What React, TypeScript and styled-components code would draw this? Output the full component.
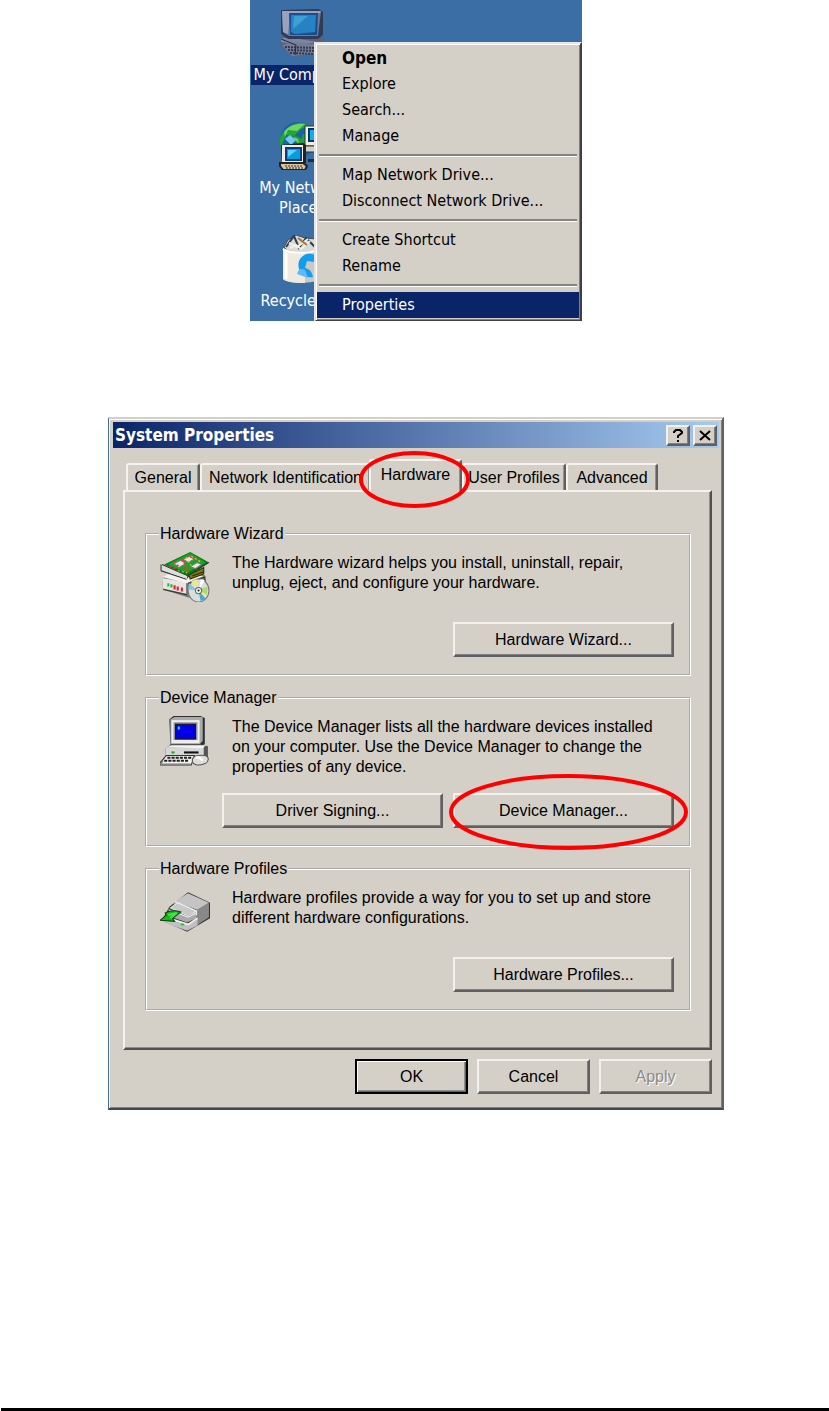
import React from 'react';
import styled, { createGlobalStyle, css } from 'styled-components';

const face = '#d4d0c8';
const navy = '#0a246a';

const Global = createGlobalStyle`
  * { box-sizing: border-box; }
  body { margin: 0; background: #fff; color: #000; }
  button { font: inherit; color: inherit; margin: 0; padding: 0; border: 0; border-radius: 0; }
`;

const Page = styled.main`
  display: flex;
  flex-direction: column;
  align-items: center;
  min-height: 100vh;
  padding-left: 3px;
`;

/* ---------- desktop and context menu ---------- */

const Desktop = styled.section`
  position: relative;
  width: 100%;
  max-width: 332px;
  height: 321px;
  overflow: hidden;
  background: #3a6ea5;
  font: 16px/20px 'DejaVu Sans Condensed', 'Noto Sans', sans-serif;
`;

const Shortcuts = styled.ul`
  display: flex;
  flex-direction: column;
  gap: 37px;
  width: 102px;
  margin: 0;
  padding: 9px 0 0 2px;
  list-style: none;
`;

const Shortcut = styled.li`
  display: flex;
  flex-direction: column;
  align-items: center;
  gap: 8px;
  color: #fff;
  text-align: center;
  & + & + & { margin-top: -20px; }
  svg { display: block; width: 48px; height: 48px; }
`;

const ShortcutName = styled.span<{ $selected?: boolean }>`
  padding: 0 2px;
  white-space: nowrap;
  background: ${p => (p.$selected ? navy : 'transparent')};
`;

const Menu = styled.div`
  position: absolute;
  top: 42px;
  right: 0;
  display: flex;
  flex-direction: column;
  width: 268px;
  padding: 1px 1px 2px;
  background: ${face};
  border: 2px solid;
  border-color: #e8e6e0 #404040 #404040 #e8e6e0;
  box-shadow: inset 1px 1px #fff, inset -1px -1px #808080;
`;

const MenuItem = styled.button<{ $strong?: boolean; $active?: boolean }>`
  height: 26px;
  padding: 0 25px;
  text-align: left;
  white-space: nowrap;
  font-size: ${p => (p.$strong ? 17 : 16)}px;
  font-weight: ${p => (p.$strong ? 700 : 400)};
  color: ${p => (p.$active ? '#fff' : '#000')};
  background: ${p => (p.$active ? navy : 'transparent')};
`;

const MenuRule = styled.hr`
  width: calc(100% - 4px);
  height: 3px;
  margin: 5px 2px;
  border: 0;
  border-top: 2px solid #868480;
  border-bottom: 1px solid #fff;
`;

/* ---------- dialog ---------- */

const Dialog = styled.section`
  display: flex;
  flex-direction: column;
  width: 100%;
  max-width: 616px;
  margin-top: 96px;
  padding: 3px 3px 14px;
  background: ${face};
  border: 2px solid;
  border-color: ${face} #606060 #404848 #3a6ea5;
  border-left-width: 1px;
  box-shadow: inset 1px 1px #fff, inset -1px -1px #808080;
  font: 16px/20px 'Liberation Sans', Arial, sans-serif;
`;

const TitleBar = styled.header`
  display: flex;
  align-items: center;
  gap: 3px;
  height: 26px;
  margin-left: 1px;
  padding: 0 2px;
  background: linear-gradient(90deg, ${navy}, #a6caf0);
`;

const Title = styled.h1`
  flex: 1;
  margin: 0;
  color: #fff;
  font: bold 17px/20px 'DejaVu Sans Condensed', 'Noto Sans', sans-serif;
`;

const bevel = css`
  background: ${face};
  border: 2px solid;
  border-color: #f2f1ee #606060 #606060 #f2f1ee;
  box-shadow: inset -1px -1px #808080;
`;

const CaptionButton = styled.button`
  ${bevel}
  display: grid;
  place-items: center;
  width: 24px;
  height: 21px;
  svg { display: block; }
`;

const Body = styled.div`
  padding: 11px 7px 0 11px;
`;

const Tabs = styled.div`
  display: flex;
  align-items: flex-end;
  height: 31px;
  padding-left: 3px;
`;

const Tab = styled.button<{ $width: number; $selected?: boolean }>`
  position: relative;
  flex: 0 1 ${p => p.$width}px;
  height: 27px;
  white-space: nowrap;
  background: ${face};
  border: 2px solid;
  border-color: #f4f3f0 #606060 transparent #f4f3f0;
  border-bottom: 0;
  border-radius: 3px 3px 0 0;
  box-shadow: inset -1px 0 #909090;
  ${p => p.$selected && css`
    z-index: 1;
    height: 33px;
    margin: 0 0 -2px -2px;
    padding-bottom: 4px;
  `}
`;

const Pane = styled.div`
  display: flex;
  flex-direction: column;
  gap: 12px;
  min-height: 560px;
  padding: 32px 19px 36px 20px;
  border: 2px solid;
  border-color: #f4f3f0 #505050 #505050 #f4f3f0;
  box-shadow: inset -1px -1px #909090;
`;

const Group = styled.fieldset`
  min-width: 0;
  margin: 0;
  padding: 8px 15px 17px 13px;
  border: 2px groove #fff;
`;

const Legend = styled.legend`
  margin-left: -1px;
  padding: 0 1px;
`;

const Info = styled.div<{ $lines: number }>`
  display: flex;
  gap: 22px;
  min-height: ${p => p.$lines * 20}px;
  svg { flex: none; width: 50px; height: 50px; }
  p { margin: 1px 0 0; }
`;

const Actions = styled.div<{ $gap: number }>`
  display: flex;
  justify-content: flex-end;
  gap: 10px;
  margin-top: ${p => p.$gap}px;
`;

const PushButton = styled.button`
  ${bevel}
  flex: 0 1 221px;
  height: 35px;
  &:disabled { color: #8c8a86; text-shadow: 1px 1px #fff; }
`;

const Footer = styled.footer`
  display: flex;
  justify-content: flex-end;
  gap: 9px;
  margin-top: 9px;
  ${PushButton} { flex-basis: 113px; }
`;

const DefaultButton = styled(PushButton)`
  border-color: #000;
  box-shadow: inset 1px 1px #fff, inset -1px -1px #606060, inset -2px -2px #909090;
`;

const Anchor = styled.span`
  position: relative;
  display: flex;
  flex: 0 1 221px;
`;

const Mark = styled.svg<{ $w: number; $h: number; $top: number; $left: number }>`
  position: absolute;
  z-index: 2;
  top: ${p => p.$top}px;
  left: ${p => p.$left}px;
  width: ${p => p.$w}px;
  height: ${p => p.$h}px;
  overflow: visible;
  pointer-events: none;
`;

const PageRule = styled.hr`
  align-self: stretch;
  height: 3px;
  margin: auto 0 0 -2px;
  border: 0;
  background: #000;
`;

function Ring(p: { w: number; h: number; top: number; left: number }) {
  return (
    <Mark $w={p.w} $h={p.h} $top={p.top} $left={p.left} aria-hidden="true">
      <ellipse cx={p.w / 2} cy={p.h / 2} rx={p.w / 2 - 2} ry={p.h / 2 - 2} fill="none" stroke="#f00" strokeWidth="4" />
    </Mark>
  );
}

/* ---------- drawings ---------- */

const ComputerIcon = () => (
  <svg viewBox="0 0 48 48" aria-hidden="true">
    <path d="M4 27 8 24h29l8 5v5L17 48 2 37z" fill="#59627b" />
    <path d="M3 29h12l25 4-22 3L3 33z" fill="#7787a5" />
    <path d="M4 36 18 33l27 3-4 8-27 3z" fill="#777c93" />
    <path d="M7 38l31 1M10 41l28 1M12 44l24 1" stroke="#303851" strokeWidth="2" strokeDasharray="2 1" />
    <path d="M3 1 41 0l4 3v23l-5 4H10l-7-5z" fill="#323b56" />
    <path d="M4 2h39l-3 25H11l-6-4z" fill="#6f7899" />
    <path d="M4 2h39l-1 2H12l-2 21-5-2z" fill="#99a2bd" />
    <path d="M11 4h29l-1 22H12z" fill="#184e91" />
    <path d="M13 6h25l-1 17-20 2-4-2z" fill="#2782c3" />
    <path d="M16 7h14L15 20z" fill="#3d9fd4" />
    <path d="M3 30l15 6-1 10" fill="none" stroke="#20283e" strokeWidth="1" />
  </svg>
);

const NetworkIcon = () => (
  <svg viewBox="0 0 48 48" aria-hidden="true">
    <circle cx="20" cy="18" r="18" fill="#1864a9" />
    <path d="M5 11C14 0 25-1 31 4l-8 3-7 7-8-1-5 12c-3-6 0-12 2-14M16 13l6 3 5 11-5-2-5-6zM26 11l9 5-5 7-8-4z" fill="#24a52d" />
    <path d="M6 10c6-8 15-9 21-8l-8 7-9-1-3 7zM15 15l5 2 1 5z" fill="#70d663" />
    <path d="M7 17l5-4 6 5-5 5z" fill="#75c9ed" />
    <path d="M27 4h20v20H27z" fill="#f4eedc" stroke="#333" />
    <path d="M31 7h13v12H31z" fill="#10aeea" stroke="#036" strokeWidth="2" />
    <path d="M27 24h21v6H27z" fill="#d4d0c8" stroke="#333" />
    <path d="M30 37h13v3H30z" fill="#202e32" />
    <path d="M3 23 25 21l3 2v18L25 43H4z" fill="#222" />
    <path d="M4 23h21v18H4z" fill="#f5eedc" />
    <path d="M8 26h15v12H8z" fill="#079cdc" stroke="#083a8d" strokeWidth="2" />
    <path d="M10 28h9l-9 7z" fill="#5bd7ff" />
    <path d="M2 41h23l4 3-2 4H5l-3-4z" fill="#d8c59c" stroke="#222" strokeWidth="2" />
    <path d="M7 44h18M8 46h17" stroke="#343434" strokeDasharray="2 1" />
  </svg>
);

const RecycleIcon = () => (
  <svg viewBox="0 0 48 48" aria-hidden="true">
    <path d="m6 12 4-7 8-5 9 3 11 1 4 9-4 5H11z" fill="#d9d9d8" stroke="#4a4b53" />
    <path d="m8 12 8-11 5 12 7-10 9 9" fill="none" stroke="#293e50" strokeWidth="2" />
    <path d="m11 8 8 4 11-8m-18 9 6-3 5 4 9-8" fill="none" stroke="#f7eedc" strokeWidth="2" />
    <path d="m20 3 9 7" stroke="#9e7845" strokeWidth="2" />
    <path d="M5 13v31c4 5 33 5 37 0V13c-7 5-28 5-37 0z" fill="#c9c9c6" />
    <path d="M5 13v31c4 4 15 4 22 4V17c-8 1-17-1-22-4z" fill="#eeeae0" />
    <path d="M8 17v27" stroke="#fff" strokeWidth="3" />
    <path d="M5 14c6 5 28 5 37 0" fill="none" stroke="#fff" strokeWidth="2" />
    <path d="M21 26c4-9 14-9 19-3l-4 4-7-1-2 7c5 1 7 4 8 9-9 2-17-7-14-16z" fill="#139eed" />
    <path d="M19 39c1-5 4-6 8-4l3 8z" fill="#61baff" />
  </svg>
);

const HardwareIcon = () => (
  <svg viewBox="0 0 48 48" aria-hidden="true">
    <path d="m2 25 8-4 33 1 2 10-17 12L3 36z" fill="#777" />
    <path d="m2 25 23 4v11L3 35z" fill="#e7e5e1" />
    <path d="m2 24 9-4 31 3-16 7z" fill="#f3f2ef" />
    <path d="M3 36l23 5M27 30l16-6v9" fill="none" stroke="#333" />
    <path d="M8 30v3m3-2v3" stroke="#22ba36" strokeWidth="2" />
    <path d="M14 32v4m3-3v4m4-3v4" stroke="#e51c29" strokeWidth="2" />
    <path d="m28 22 14-7v6l-13 5zm3 1 11-4" fill="#807a14" stroke="#292900" />
    <path d="m4 12 25-12 18 10-20 14z" fill="#087b16" />
    <path d="m7 12 22-11 15 9-18 10z" fill="#16a825" />
    <path d="m13 11 7-3 5 3-7 4zm9-4 6-3 5 3-6 3zm7 7 7-4 4 2-6 4z" fill="#e9e7e2" stroke="#777" />
    <path d="m9 14 6 2m-1-7 5 7m2-9 5 7m3-10 8 5m-15 7 7 2" stroke="#ef3540" strokeWidth="2" strokeDasharray="2 2" />
    <path d="m17 18 9 2m-1-15 5 8m0-9 10 6" stroke="#e8d538" strokeWidth="1" strokeDasharray="2 2" />
    <path d="m2 12 24 11 21-13M1 12v6l24 8 3-3" fill="none" stroke="#353535" strokeWidth="1" />
    <path d="m2 13 24 10v3L2 17z" fill="#ddd" />
    <ellipse cx="37" cy="37" rx="10" ry="11" fill="#d9dddd" stroke="#777" strokeWidth="1" />
    <path d="m36 37-6-9 5-2zm1 0 8 2-4 7z" fill="#eee783" />
    <path d="m37 36 9-3-1 8z" fill="#a9db75" />
    <path d="m37 37 7 8-5 2z" fill="#43a8dc" />
    <path d="m36 37-9-1 1-6z" fill="#86c4da" />
    <path d="m38 36 5-9-4-1z" fill="#fff" />
    <ellipse cx="37" cy="37" rx="3" ry="3" fill="#eee" stroke="#666" />
    <circle cx="37" cy="37" r="1" fill="#222" />
  </svg>
);

const DeviceIcon = () => (
  <svg viewBox="0 0 48 48" aria-hidden="true">
    <path d="m9 3 4-3h26l4 2v25l-4 2H10z" fill="#303030" />
    <path d="m10 3 4-2h27v23l-3 3H10z" fill="#aaa" />
    <path d="M11 4h27v22H11z" fill="#eee" />
    <path d="M13 6h23v17H13z" fill="#909090" />
    <path d="M15 8h19v14H15z" fill="#0000e8" stroke="#111" />
    <path d="M17 10h2v3h-2z" fill="#18dfff" />
    <path d="m5 31 6-4h28l7 2v10l-4 3H6z" fill="#555" />
    <path d="M5 30h37v10H6z" fill="#d7d7d7" />
    <path d="m6 30 5-2h33l-3 3z" fill="#f4f4f4" />
    <path d="M23 35h14" stroke="#111" strokeWidth="2" />
    <path d="M11 35h3" stroke="#13ad24" strokeWidth="2" />
    <path d="m0 45 6-7h27l-3 9H0z" fill="#f3f3ef" stroke="#333" />
    <path d="m7 40 23 0m-26 3 24 0" stroke="#202020" strokeWidth="2" strokeDasharray="3 1" />
    <path d="m3 43-2 3h28" fill="none" stroke="#777" />
    <path d="M31 43c0-5 6-6 12-5 5 1 4 7-1 8-5 2-11 1-11-3z" fill="#deddd9" stroke="#555" />
    <path d="M34 40c3-1 5 0 7 3" fill="none" stroke="#fff" strokeWidth="2" />
  </svg>
);

const ProfileIcon = () => (
  <svg viewBox="0 0 48 48" aria-hidden="true">
    <path d="m9 19 18-14 21 10v15L26 43 2 32z" fill="#333" />
    <path d="m14 14 13-8 20 9-11 7z" fill="#c4c4c4" />
    <path d="m35 22 12-7v14l-12 8z" fill="#888" />
    <path d="m14 14 21 9v5l-22-9z" fill="#aaa" />
    <path d="m10 20 7-5 18 8-8 5z" fill="#c8c8c8" stroke="#e4e4e4" />
    <path d="m8 21 18 7 9-4v6l-9 4-17-6z" fill="#aaa" />
    <path d="m4 30 23 7 9-6v6l-10 5L4 34z" fill="#c0c0c0" />
    <path d="m5 29 22 7 9-6" fill="none" stroke="#eee" strokeWidth="2" />
    <path d="m14 14 21 9v4m-26-5 18 7 8-4" fill="none" stroke="#eee" />
    <path d="m0 32 6-5-1-2c5-3 9-3 15-1l-8 6 2 3z" fill="#16b71d" stroke="#103f13" strokeWidth="1" />
    <path d="m8 27 8-2-6 5" fill="none" stroke="#42e643" strokeWidth="2" />
    <path d="M20 35h3v2h-3z" fill="#00e321" />
  </svg>
);

export default function App() {
  return (
    <>
      <Global />
      <Page>
        <Desktop aria-label="Desktop">
          <Shortcuts>
            <Shortcut><ComputerIcon /><ShortcutName $selected>My Computer</ShortcutName></Shortcut>
            <Shortcut><NetworkIcon /><ShortcutName>My Network<br />Places</ShortcutName></Shortcut>
            <Shortcut><RecycleIcon /><ShortcutName>Recycle Bin</ShortcutName></Shortcut>
          </Shortcuts>
          <Menu role="menu">
            <MenuItem role="menuitem" $strong>Open</MenuItem>
            <MenuItem role="menuitem">Explore</MenuItem>
            <MenuItem role="menuitem">Search...</MenuItem>
            <MenuItem role="menuitem">Manage</MenuItem>
            <MenuRule />
            <MenuItem role="menuitem">Map Network Drive...</MenuItem>
            <MenuItem role="menuitem">Disconnect Network Drive...</MenuItem>
            <MenuRule />
            <MenuItem role="menuitem">Create Shortcut</MenuItem>
            <MenuItem role="menuitem">Rename</MenuItem>
            <MenuRule />
            <MenuItem role="menuitem" $active>Properties</MenuItem>
          </Menu>
        </Desktop>

        <Dialog role="dialog" aria-labelledby="dialog-title">
          <TitleBar>
            <Title id="dialog-title">System Properties</Title>
            <CaptionButton aria-label="Help">
              <svg width="10" height="13" viewBox="0 0 10 13"><path d="M1 4V3l2-2h4l2 2v1L5 7v2M5 11v2" fill="none" stroke="#000" strokeWidth="2" /></svg>
            </CaptionButton>
            <CaptionButton aria-label="Close">
              <svg width="12" height="11" viewBox="0 0 12 11"><path d="m1 1 10 9M11 1 1 10" stroke="#000" strokeWidth="2" /></svg>
            </CaptionButton>
          </TitleBar>
          <Body>
            <Tabs role="tablist">
              <Tab role="tab" $width={74}>General</Tab>
              <Tab role="tab" $width={171}>Network Identification</Tab>
              <Tab role="tab" $width={93} $selected aria-selected="true">
                Hardware
                <Ring w={111} h={57} top={-10} left={-12} />
              </Tab>
              <Tab role="tab" $width={104}>User Profiles</Tab>
              <Tab role="tab" $width={92}>Advanced</Tab>
            </Tabs>
            <Pane role="tabpanel">
              <Group>
                <Legend>Hardware Wizard</Legend>
                <Info $lines={2}>
                  <HardwareIcon />
                  <p>The Hardware wizard helps you install, uninstall, repair,<br />unplug, eject, and configure your hardware.</p>
                </Info>
                <Actions $gap={20}><PushButton>Hardware Wizard...</PushButton></Actions>
              </Group>
              <Group>
                <Legend>Device Manager</Legend>
                <Info $lines={3}>
                  <DeviceIcon />
                  <p>The Device Manager lists all the hardware devices installed<br />on your computer. Use the Device Manager to change the<br />properties of any device.</p>
                </Info>
                <Actions $gap={16}>
                  <PushButton>Driver Signing...</PushButton>
                  <Anchor>
                    <PushButton>Device Manager...</PushButton>
                    <Ring w={239} h={76} top={-19} left={-4} />
                  </Anchor>
                </Actions>
              </Group>
              <Group>
                <Legend>Hardware Profiles</Legend>
                <Info $lines={2}>
                  <ProfileIcon />
                  <p>Hardware profiles provide a way for you to set up and store<br />different hardware configurations.</p>
                </Info>
                <Actions $gap={20}><PushButton>Hardware Profiles...</PushButton></Actions>
              </Group>
            </Pane>
            <Footer>
              <DefaultButton>OK</DefaultButton>
              <PushButton>Cancel</PushButton>
              <PushButton disabled>Apply</PushButton>
            </Footer>
          </Body>
        </Dialog>
        <PageRule />
      </Page>
    </>
  );
}
